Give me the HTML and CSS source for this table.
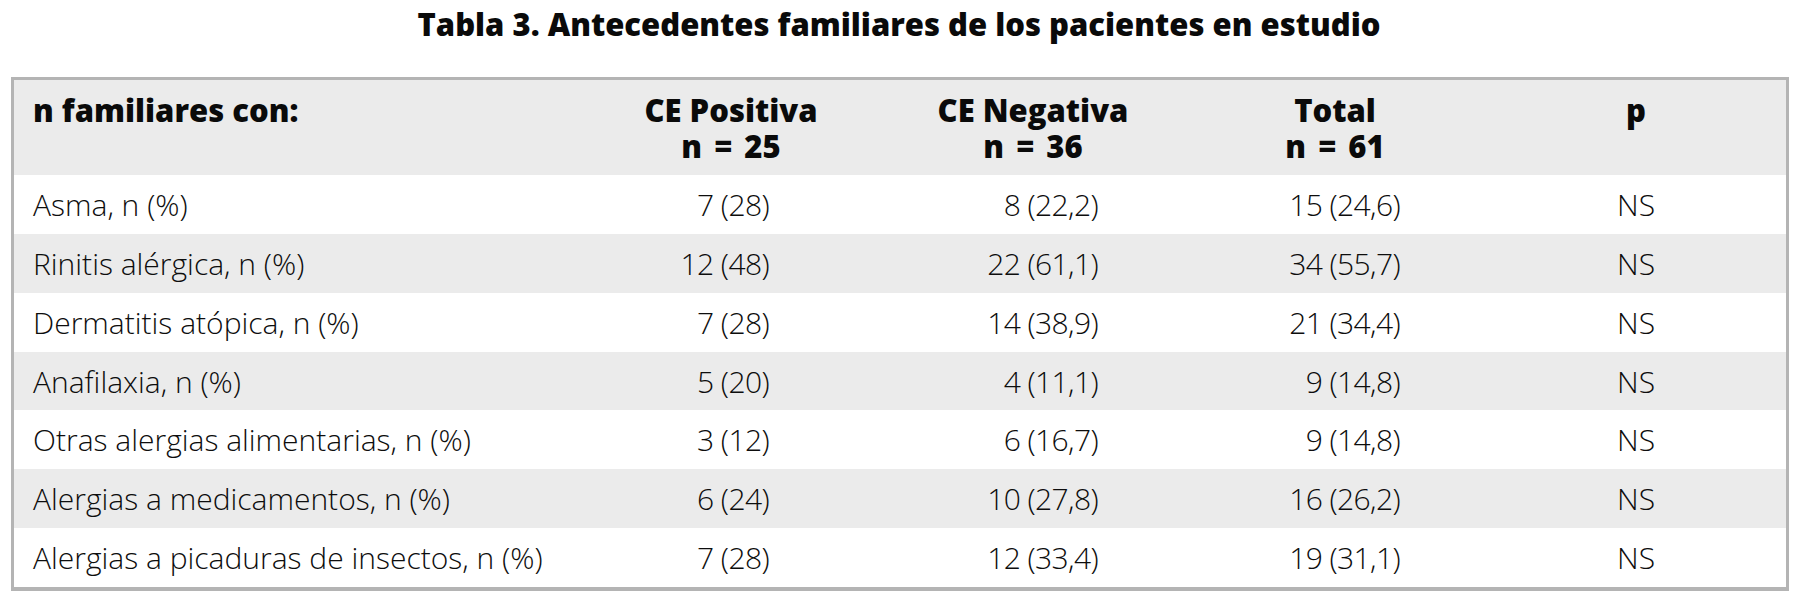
FILE: index.html
```html
<!DOCTYPE html>
<html lang="es">
<head>
<meta charset="utf-8">
<title>Tabla 3</title>
<link rel="stylesheet" href="styles.css">
</head>
<body>
<div class="page">
  <h1 class="title">Tabla 3. Antecedentes familiares de los pacientes en estudio</h1>
  <table class="data">
    <colgroup>
      <col class="c-label">
      <col class="c-num">
      <col class="c-num">
      <col class="c-num">
      <col class="c-p">
    </colgroup>
    <thead>
      <tr>
        <th class="h-label">n familiares con:</th>
        <th><span class="hl">CE Positiva</span><span class="hl hn">n = 25</span></th>
        <th><span class="hl">CE Negativa</span><span class="hl hn">n = 36</span></th>
        <th><span class="hl">Total</span><span class="hl hn">n = 61</span></th>
        <th><span class="hl">p</span></th>
      </tr>
    </thead>
    <tbody>
      <tr><td class="label">Asma, n (%)</td><td class="num n2">7 (28)</td><td class="num n3">8 (22,2)</td><td class="num n4">15 (24,6)</td><td class="p">NS</td></tr>
      <tr><td class="label">Rinitis alérgica, n (%)</td><td class="num n2">12 (48)</td><td class="num n3">22 (61,1)</td><td class="num n4">34 (55,7)</td><td class="p">NS</td></tr>
      <tr><td class="label">Dermatitis atópica, n (%)</td><td class="num n2">7 (28)</td><td class="num n3">14 (38,9)</td><td class="num n4">21 (34,4)</td><td class="p">NS</td></tr>
      <tr><td class="label">Anafilaxia, n (%)</td><td class="num n2">5 (20)</td><td class="num n3">4 (11,1)</td><td class="num n4">9 (14,8)</td><td class="p">NS</td></tr>
      <tr><td class="label">Otras alergias alimentarias, n (%)</td><td class="num n2">3 (12)</td><td class="num n3">6 (16,7)</td><td class="num n4">9 (14,8)</td><td class="p">NS</td></tr>
      <tr><td class="label">Alergias a medicamentos, n (%)</td><td class="num n2">6 (24)</td><td class="num n3">10 (27,8)</td><td class="num n4">16 (26,2)</td><td class="p">NS</td></tr>
      <tr><td class="label">Alergias a picaduras de insectos, n (%)</td><td class="num n2">7 (28)</td><td class="num n3">12 (33,4)</td><td class="num n4">19 (31,1)</td><td class="p">NS</td></tr>
    </tbody>
  </table>
</div>
</body>
</html>
```

FILE: styles.css
```css
* { box-sizing: border-box; }

html, body {
  margin: 0;
  padding: 0;
  background: #ffffff;
}

body {
  font-family: "Open Sans", "Noto Sans", sans-serif;
  color: #111111;
}

.page {
  margin-left: 11px;
  width: 1776px;
}

.title {
  margin: 0;
  height: 77px;
  padding-top: 6px;
  text-align: center;
  font-size: 31px;
  font-weight: 800;
  line-height: 36px;
  color: #0a0a0a;
}

.data {
  width: 1776px;
  border-collapse: separate;
  border-spacing: 0;
  border: 3px solid #b4b4b4;
  border-bottom-width: 4px;
  table-layout: fixed;
  font-size: 30px;
  line-height: 36px;
}

.c-label { width: 566px; }
.c-num { width: 302px; }
.c-p { width: 300px; }

.data thead th {
  background: #ebebeb;
  font-size: 31px;
  font-weight: 800;
  text-align: center;
  vertical-align: top;
  padding: 12px 0 11px 0;
  height: 95px;
  color: #0a0a0a;
}

.hl {
  display: block;
  height: 36px;
}

.hn {
  word-spacing: 4px;
}

.data thead th.h-label {
  text-align: left;
  padding-left: 19px;
}

.data tbody tr {
  height: 58.86px;
}

.data tbody tr:nth-child(even) td {
  background: #ebebeb;
}

.data tbody td {
  padding: 12px 0 10px 0;
  vertical-align: top;
  white-space: nowrap;
  font-weight: 300;
  color: #0d0d0d;
  letter-spacing: 0;
}

.data td.label { padding-left: 19px; text-align: left; }
.data td.num { letter-spacing: -0.6px; text-align: right; }
.data td.n2 { padding-right: 113px; }
.data td.n3 { padding-right: 86px; }
.data td.n4 { padding-right: 86px; }
.data td.p { text-align: center; }
```
